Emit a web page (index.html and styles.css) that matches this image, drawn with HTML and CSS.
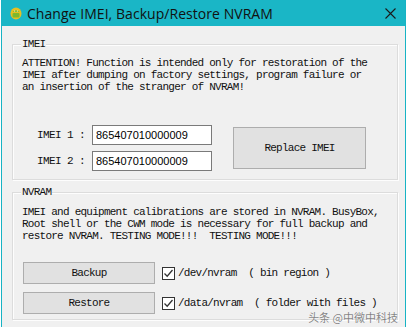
FILE: index.html
```html
<!DOCTYPE html>
<html lang="en">

<head>
    <meta charset="UTF-8">
    <title>Change IMEI, Backup/Restore NVRAM</title>
    <link rel="stylesheet" href="styles.css">
</head>

<body>
    <div class="window">
        <div class="titlebar">
            <svg class="icon" width="12" height="13" viewBox="0 0 12 13">
                <ellipse cx="6" cy="6.5" rx="5.5" ry="6" fill="#e8c020"/>
                <path d="M2.5 5 Q6 1.5 9.5 5 Z" fill="#7cb82f"/>
                <rect x="2.5" y="6" width="7" height="4.5" rx="1" fill="#7cb82f"/>
                <circle cx="4.6" cy="4" r="0.6" fill="#fff"/>
                <circle cx="7.4" cy="4" r="0.6" fill="#fff"/>
            </svg>
            <span class="title">Change IMEI, Backup/Restore NVRAM</span>
            <svg class="close" width="11" height="11" viewBox="0 0 11 11">
                <path d="M0.5 0.5 L10.5 10.5 M10.5 0.5 L0.5 10.5" stroke="#1a1a1a" stroke-width="1.1"/>
            </svg>
        </div>

        <div class="client">
            <!-- IMEI -->
            <div class="group group-imei">
                <span class="legend">IMEI</span>
                <p class="text">ATTENTION! Function is intended only for restoration of the<br>IMEI after dumping on factory settings, program failure or<br>an insertion of the stranger of NVRAM!</p>
                <div class="imei-rows">
                    <div class="fields">
                        <div class="field">
                            <span class="label">IMEI 1 :</span>
                            <input class="input" type="text" value="865407010000009">
                        </div>
                        <div class="field">
                            <span class="label">IMEI 2 :</span>
                            <input class="input" type="text" value="865407010000009">
                        </div>
                    </div>
                    <button class="btn btn-replace">Replace IMEI</button>
                </div>
            </div>

            <!-- NVRAM -->
            <div class="group group-nvram">
                <span class="legend">NVRAM</span>
                <p class="text">IMEI and equipment calibrations are stored in NVRAM. BusyBox,<br>Root shell or the CWM mode is necessary for full backup and<br>restore NVRAM. TESTING MODE!!!&nbsp; TESTING MODE!!!</p>
                <div class="actions">
                    <div class="action">
                        <button class="btn btn-small">Backup</button>
                        <span class="check">
                            <svg width="13" height="13" viewBox="0 0 13 13">
                                <rect x="0.5" y="0.5" width="12" height="12" fill="#fff" stroke="#333"/>
                                <path d="M2.5 6.5 L5.2 9.2 L10.5 3" fill="none" stroke="#333" stroke-width="1.3"/>
                            </svg>
                        </span>
                        <span class="path">/dev/nvram&nbsp; ( bin region )</span>
                    </div>
                    <div class="action">
                        <button class="btn btn-small">Restore</button>
                        <span class="check">
                            <svg width="13" height="13" viewBox="0 0 13 13">
                                <rect x="0.5" y="0.5" width="12" height="12" fill="#fff" stroke="#333"/>
                                <path d="M2.5 6.5 L5.2 9.2 L10.5 3" fill="none" stroke="#333" stroke-width="1.3"/>
                            </svg>
                        </span>
                        <span class="path">/data/nvram&nbsp; ( folder with files )</span>
                    </div>
                </div>
            </div>
        </div>
        <!-- 水印 -->
        <div class="watermark">头条 @中微中科技</div>
    </div>
</body>

</html>
```

FILE: styles.css
```css
* {
    margin: 0;
    padding: 0;
    box-sizing: border-box;
}

body {
    width: 407px;
    height: 327px;
    overflow: hidden;
    background-color: #ffffff;
    font-family: "Liberation Mono", monospace;
}

.window {
    position: relative;
    margin-left: 1px;
    width: 405px;
    height: 327px;
    border-left: 1px solid #17b3c4;
    border-right: 1px solid #17b3c4;
    background-color: #f0f0f0;
}

.titlebar {
    display: flex;
    align-items: center;
    height: 26px;
    background-color: #1ab6c6;
}

.icon {
    margin-left: 8px;
    margin-top: 1px;
}

.title {
    margin-left: 5px;
    font-family: "Open Sans", "Liberation Sans", sans-serif;
    font-size: 14px;
    color: #111111;
    letter-spacing: 0.05px;
}

.close {
    margin-left: auto;
    margin-right: 9px;
}

.client {
    padding: 18px 7px 0 10px;
}

.group {
    position: relative;
    border: 1px solid #dcdcdc;
    box-shadow: inset 1px 1px 0 #fdfdfd, 1px 1px 0 #fdfdfd;
}

.legend {
    position: absolute;
    top: -7px;
    left: 8px;
    padding: 0 1px;
    background-color: #f0f0f0;
    font-size: 11px;
    line-height: 12px;
    letter-spacing: -0.75px;
    color: #111111;
}

.text {
    font-size: 11px;
    line-height: 12px;
    letter-spacing: -0.75px;
    color: #111111;
    white-space: nowrap;
}

.group-imei {
    height: 136px;
    padding: 12px 0 0 9px;
}

.imei-rows {
    display: flex;
    align-items: center;
    margin-top: 32px;
    margin-left: 15px;
}

.fields {
    display: flex;
    flex-direction: column;
    gap: 6px;
}

.field {
    display: flex;
    align-items: center;
}

.label {
    width: 55px;
    font-size: 11px;
    letter-spacing: -0.6px;
    color: #111111;
}

.input {
    width: 120px;
    height: 20px;
    border: 1px solid #7a7a7a;
    padding-left: 3px;
    outline: none;
    background-color: #ffffff;
    font-family: "Liberation Sans", Arial, sans-serif;
    font-size: 11px;
    color: #000000;
}

.btn {
    border: 1px solid #adadad;
    background-color: #e1e1e1;
    font-family: "Liberation Mono", monospace;
    font-size: 11px;
    letter-spacing: -0.75px;
    color: #111111;
}

.btn-replace {
    width: 133px;
    height: 42px;
    margin-left: 21px;
}

.group-nvram {
    height: 128px;
    margin-top: 12px;
    padding: 13px 0 0 9px;
}

.actions {
    display: flex;
    flex-direction: column;
    gap: 8px;
    margin-top: 20px;
    margin-left: 1px;
}

.action {
    display: flex;
    align-items: center;
}

.btn-small {
    width: 132px;
    height: 22px;
}

.check {
    display: flex;
    margin-left: 7px;
    margin-top: 1px;
}

.path {
    margin-left: 3px;
    font-size: 11px;
    letter-spacing: -0.75px;
    color: #111111;
    white-space: nowrap;
}

.watermark {
    position: absolute;
    right: 7px;
    bottom: 4px;
    font-family: "Noto Sans CJK SC", sans-serif;
    font-size: 11px;
    line-height: 12px;
    color: rgba(90, 90, 90, 0.75);
    text-shadow: 0 0 1px #ffffff;
}
```
